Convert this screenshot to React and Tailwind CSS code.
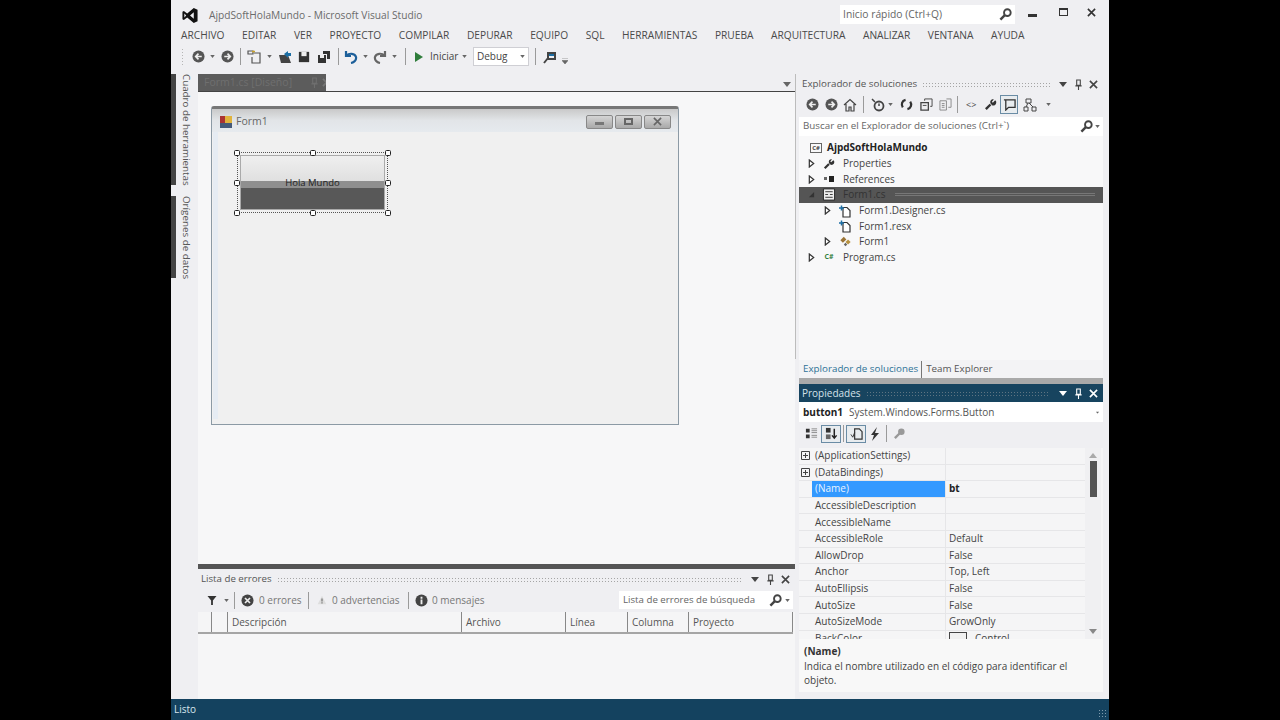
import React from 'react'

const menus = ['ARCHIVO', 'EDITAR', 'VER', 'PROYECTO', 'COMPILAR', 'DEPURAR', 'EQUIPO', 'SQL', 'HERRAMIENTAS', 'PRUEBA', 'ARQUITECTURA', 'ANALIZAR', 'VENTANA', 'AYUDA']

const props = [
  ['(ApplicationSettings)', '', 'group'],
  ['(DataBindings)', '', 'group'],
  ['(Name)', 'bt', 'selected'],
  ['AccessibleDescription', ''],
  ['AccessibleName', ''],
  ['AccessibleRole', 'Default'],
  ['AllowDrop', 'False'],
  ['Anchor', 'Top, Left'],
  ['AutoEllipsis', 'False'],
  ['AutoSize', 'False'],
  ['AutoSizeMode', 'GrowOnly'],
  ['BackColor', 'Control', 'color'],
]

const Svg = ({ className = '', box = '0 0 14 14', children }) => (
  <svg viewBox={box} className={'shrink-0 ' + className}>{children}</svg>
)

const Caret = ({ className = '' }) => (
  <Svg box="0 0 6 4" className={'w-[5px] h-[3px] ' + className}><path d="M0 0h6L3 4z" fill="#666" /></Svg>
)

const Sep = ({ className = '' }) => <div className={'w-px h-[17px] bg-[#9a9a9a] shrink-0 ' + className} />

const Circle = ({ dir = 'left', className = '' }) => (
  <Svg className={'w-[13px] h-[13px] ' + className}>
    <circle cx="7" cy="7" r="6.5" fill="#555" />
    <path d={dir === 'left' ? 'M10.5 7H4.5M7 4L4 7l3 3' : 'M3.5 7h6M7 4l3 3-3 3'} stroke="#eee" strokeWidth="1.8" fill="none" />
  </Svg>
)

const Lens = ({ className = '' }) => (
  <Svg className={'w-[13px] h-[13px] ' + className}>
    <circle cx="9" cy="5" r="3.6" fill="none" stroke="#444" strokeWidth="2" />
    <path d="M6.3 7.7L1.5 12.5" stroke="#444" strokeWidth="2.6" />
  </Svg>
)

const Pin = ({ color = '#444', className = '' }) => (
  <Svg box="0 0 10 12" className={'w-[9px] h-[11px] ' + className}>
    <path d="M3 1h4v6H3zM1.5 7.5h7M5 8v4M7 1v6" stroke={color} strokeWidth="1.2" fill="none" />
  </Svg>
)

const Close = ({ color = '#444', className = '' }) => (
  <Svg box="0 0 10 10" className={'w-[9px] h-[9px] ' + className}>
    <path d="M1 1l8 8M9 1l-8 8" stroke={color} strokeWidth="1.8" />
  </Svg>
)

const HeadCaret = ({ color = '#444', className = '' }) => (
  <Svg box="0 0 8 5" className={'w-[8px] h-[5px] ' + className}><path d="M0 0h8L4 5z" fill={color} /></Svg>
)

const Dots = ({ className = '' }) => (
  <div className={"flex-1 h-[5px] bg-[radial-gradient(#a5a5a5_0.7px,transparent_0.8px)] bg-[length:3px_3px] " + className} />
)

const Expander = ({ open }) => (
  <Svg box="0 0 8 10" className="w-[7px] h-[9px]">
    {open ? <path d="M7 2v6H1z" fill="#333" /> : <path d="M1.5 1l5 4-5 4z" fill="#fff" stroke="#333" strokeWidth="1.4" />}
  </Svg>
)

const FileIcon = () => (
  <Svg className="w-[14px] h-[14px]">
    <path d="M5 3.5h4l3 3v6.5H5z" fill="#fff" stroke="#333" strokeWidth="1.2" />
    <path d="M1 4h5M3.5 1.5v5" stroke="#1c6ea4" strokeWidth="1.5" />
  </Svg>
)

const TreeRow = ({ indent, arrow, icon, text, bold, selected }) => (
  <div className={indent + ' h-[15.7px] flex items-center ' + (selected ? 'bg-[#555555] text-[#333]' : '')}>
    <div className="w-[9px] flex justify-center">{arrow}</div>
    <div className="w-[26px] flex justify-center">{icon}</div>
    <span className={'ml-[1px] whitespace-nowrap ' + (bold ? 'font-bold text-[#222]' : '')}>{text}</span>
    {selected && <div className="ml-[10px] w-[200px] h-[3px] border-y border-[#777]" />}
  </div>
)

const Handle = ({ className }) => (
  <div className={'absolute w-[6px] h-[6px] bg-white border border-[#222] rounded-[1.5px] ' + className} />
)

const FormBtn = ({ children }) => (
  <div className="w-[27px] h-[14px] border border-[#888] rounded-[2px] bg-linear-to-b from-[#d5d5d5] to-[#a9a9a9] flex items-center justify-center">{children}</div>
)

export default function App() {
  return (
    <div className="w-[1280px] h-[720px] overflow-hidden bg-black pl-[171px] font-['Open_Sans',sans-serif] text-[10.5px] text-[#444]">
      <div className="w-[938px] h-full bg-[#efeff2] flex flex-col">
        {/* title bar */}
        <div className="h-[27px] shrink-0 flex items-center pt-[4px]">
          <Svg box="0 0 18 18" className="w-[18px] h-[17px] ml-[10px]">
            <path d="M13 1l4 2v12l-4 2-7-6-3.5 2.8L1 13V5l1.500-.8L6 7zM13 5.500L9 9l4 3.500zM3 7v4l2-2z" fill="#111" fillRule="evenodd" />
          </Svg>
          <span className="ml-[10px] text-[#6b6b6b] text-[10.2px]">AjpdSoftHolaMundo - Microsoft Visual Studio</span>
          <div className="ml-auto w-[175px] h-[19px] bg-white flex items-center pl-[3px] text-[10.3px] text-[#666] mb-[2px]">
            Inicio rápido (Ctrl+Q)
            <Lens className="ml-auto mr-[3px]" />
          </div>
          <div className="w-[9px] h-[3px] bg-[#333] ml-[13px] mb-[1px]" />
          <div className="w-[9px] h-[8px] border border-[#333] border-t-2 ml-[22px] mb-[7px]" />
          <Close color="#333" className="ml-[19px] mr-[13px] mb-[7px]" />
        </div>

        {/* menu */}
        <div className="h-[17px] shrink-0 flex items-center gap-[17.6px] pl-[10px] text-[10.2px] text-[#4a4a4a]">
          {menus.map(m => <span key={m}>{m}</span>)}
        </div>

        {/* toolbar */}
        <div className="h-[25px] shrink-0 flex items-center text-[10px]">
          <div className="ml-[10px] w-[4px] h-[17px] bg-[radial-gradient(#b5b5b5_0.7px,transparent_0.8px)] bg-[length:3px_3px]" />
          <Circle className="ml-[7px]" />
          <Caret className="ml-[5px]" />
          <Circle dir="right" className="ml-[6px]" />
          <Sep className="ml-[6px]" />
          <Svg className="w-[14px] h-[14px] ml-[6px]">
            <path d="M1 1h5v3H1zM7 3h6v10H5V7" fill="none" stroke="#555" strokeWidth="1.2" />
            <path d="M5 1.500h3" stroke="#c9a227" strokeWidth="1.500" />
          </Svg>
          <Caret className="ml-[6px]" />
          <Svg className="w-[14px] h-[14px] ml-[6px]">
            <path d="M1 5h9l3 8H3z" fill="#444" />
            <path d="M6 4l4-3v2h3v3h-3v2z" fill="#1c6ea4" />
          </Svg>
          <Svg className="w-[12px] h-[12px] ml-[6px]">
            <path d="M1 1h12v12H1z" fill="#333" /><path d="M4 1h6v5H4z" fill="#eee" />
          </Svg>
          <Svg className="w-[14px] h-[14px] ml-[7px]">
            <path d="M1 5h8v8H1z" fill="#333" /><path d="M6 1h7v8H10V4H6z" fill="#333" /><path d="M3 5h4v3H3z" fill="#eee" />
          </Svg>
          <Sep className="ml-[7px]" />
          <Svg className="w-[14px] h-[14px] ml-[5px]">
            <path d="M2 1v5h5M2.500 5.500C5 3 11 3 12 7c.6 3-2 5.500-5 6" fill="none" stroke="#1c5f9a" strokeWidth="2.200" />
          </Svg>
          <Caret className="ml-[5px]" />
          <Svg className="w-[14px] h-[14px] ml-[5px]">
            <path d="M12 1v5H7M11.500 5.500C9 3 3 3 2 7c-.6 3 2 5.500 5 6" fill="none" stroke="#666" strokeWidth="2.200" />
          </Svg>
          <Caret className="ml-[5px]" />
          <Sep className="ml-[8px]" />
          <Svg box="0 0 8 10" className="w-[8px] h-[10px] ml-[9px]"><path d="M0 0l8 5-8 5z" fill="#2f7d3b" /></Svg>
          <span className="ml-[7px] w-[29px] text-[#444]">Iniciar</span>
          <Caret className="ml-[3px]" />
          <div className="ml-[6px] w-[56px] h-[19px] bg-white border border-[#cfcfd4] flex items-center pl-[3px] pr-[3px]">
            Debug
            <Caret className="ml-auto" />
          </div>
          <Sep className="ml-[6px]" />
          <Svg className="w-[14px] h-[14px] ml-[6px]">
            <path d="M2 13l4-5M6 3h7v6H6z" stroke="#444" strokeWidth="2" fill="none" />
            <path d="M7 4h5v2H7z" fill="#1c6ea4" />
          </Svg>
          <Svg box="0 0 6 6" className="w-[6px] h-[6px] ml-[6px] mt-[8px]"><path d="M0 0h6M0 2.500h6L3 6z" fill="#666" stroke="#666" strokeWidth=".6" /></Svg>
        </div>

        {/* main area */}
        <div className="flex-1 min-h-0 flex pt-[5px]">
          {/* side rail */}
          <div className="w-[27px] shrink-0 flex flex-col gap-[11px] text-[9.8px] text-[#555]">
            <div className="h-[111px] border-l-[5px] border-[#444] pl-[2px]">
              <span className="[writing-mode:vertical-rl] whitespace-nowrap">Cuadro de herramientas</span>
            </div>
            <div className="h-[82px] border-l-[5px] border-[#444] pl-[2px]">
              <span className="[writing-mode:vertical-rl] whitespace-nowrap">Orígenes de datos</span>
            </div>
          </div>

          {/* center column */}
          <div className="w-[597px] shrink-0 flex flex-col">
            <div className="h-[18px] shrink-0 flex border-b border-[#444]">
              <div className="w-[128px] bg-[#5c5c5c] text-[#6f6f6f] pl-[6px] flex items-center whitespace-nowrap overflow-hidden">
                Form1.cs [Diseño]
                <Pin color="#6f6f6f" className="ml-[18px]" />
                <Close color="#777" className="ml-[3px]" />
              </div>
              <HeadCaret color="#666" className="ml-auto mr-[4px] mt-[8px]" />
            </div>

            {/* designer */}
            <div className="flex-1 min-h-0 bg-[#f7f7f8] pl-[13px] pt-[14px]">
              <div className="w-[468px] h-[319px] border border-[#8c9aa5] rounded-t-[3px] bg-[#f0f0f0] flex flex-col border-t-[3px] border-t-[#777]">
                <div className="h-[23px] shrink-0 bg-linear-to-b from-[#c9c9c9] via-[#e2e5e8] to-[#e6eaee] flex items-center pl-[7px] pt-[2px] text-[#666]">
                  <Svg className="w-[14px] h-[14px]">
                    <path d="M1 1h6v7H1z" fill="#a33" /><path d="M6 1h7v7H6z" fill="#e0b33c" /><path d="M1 8h12v5H1z" fill="#445a7a" />
                  </Svg>
                  <span className="ml-[3px]">Form1</span>
                  <div className="ml-auto mr-[7px] flex gap-[2px]">
                    <FormBtn><div className="w-[9px] h-[3px] bg-[#777] mt-[3px]" /></FormBtn>
                    <FormBtn><div className="w-[9px] h-[7px] border-2 border-[#666]" /></FormBtn>
                    <FormBtn><Close color="#666" /></FormBtn>
                  </div>
                </div>
                <div className="flex-1 ml-[1px] mr-[5px] mb-[5px] border-l-[5px] border-[#e6ecf3] pl-[19px] pt-[20px]">
                  {/* selected button */}
                  <div className="relative w-[151px] h-[61px] border border-dotted border-[#555] p-[2px]">
                    <div className="h-full flex flex-col border border-[#aaa] text-[#222] text-[9.5px]">
                      <div className="h-[25px] bg-linear-to-b from-[#efefef] to-[#e0e0e0]" />
                      <div className="h-[7px] bg-[#8f8f8f] relative">
                        <span className="absolute inset-x-0 -top-[5px] text-center leading-[13px]">Hola Mundo</span>
                      </div>
                      <div className="flex-1 bg-[#585858]" />
                    </div>
                    <Handle className="-left-[4px] -top-[3px]" />
                    <Handle className="left-[72px] -top-[3px]" />
                    <Handle className="-right-[4px] -top-[3px]" />
                    <Handle className="-left-[4px] top-[27px]" />
                    <Handle className="-right-[4px] top-[27px]" />
                    <Handle className="-left-[4px] -bottom-[4px]" />
                    <Handle className="left-[72px] -bottom-[4px]" />
                    <Handle className="-right-[4px] -bottom-[4px]" />
                  </div>
                </div>
              </div>
            </div>

            {/* error list */}
            <div className="h-[135px] shrink-0 flex flex-col border-t-[5px] border-[#555] bg-[#f5f5f6]">
              <div className="h-[19px] shrink-0 flex items-center bg-[#efeff2] pl-[3px] pr-[5px] pt-[1px] text-[#555]">
                <span className="text-[9.7px]">Lista de errores</span>
                <Dots className="mx-[5px]" />
                <HeadCaret className="ml-[4px]" />
                <Pin className="ml-[7px]" />
                <Close className="ml-[6px]" />
              </div>
              <div className="h-[24px] shrink-0 flex items-center bg-[#efeff2] text-[10px] text-[#777]">
                <Svg box="0 0 10 10" className="w-[10px] h-[9px] ml-[9px]"><path d="M0 0h10L6 5v5H4V5z" fill="#333" /></Svg>
                <Caret className="ml-[7px]" />
                <Sep className="ml-[5px]" />
                <Svg className="w-[13px] h-[13px] ml-[6px]">
                  <circle cx="7" cy="7" r="6.500" fill="#444" /><path d="M4.300 4.300l5.400 5.400M9.700 4.300l-5.400 5.400" stroke="#eee" strokeWidth="1.800" />
                </Svg>
                <span className="ml-[5px] w-[40px] whitespace-nowrap">0 errores</span>
                <Sep className="ml-[9px]" />
                <Svg className="w-[10px] h-[12px] ml-[8px]"><path d="M7 1l6 12H1z" fill="#ddd" /><path d="M7 5v4M7 10v2" stroke="#666" strokeWidth="1.500" /></Svg>
                <span className="ml-[5px] w-[67px] whitespace-nowrap">0 advertencias</span>
                <Sep className="ml-[9px]" />
                <Svg className="w-[13px] h-[13px] ml-[6px]">
                  <circle cx="7" cy="7" r="6.500" fill="#444" /><path d="M7 6v5M7 3v2" stroke="#eee" strokeWidth="2" />
                </Svg>
                <span className="ml-[4px] whitespace-nowrap">0 mensajes</span>
                <div className="ml-auto mr-[2px] w-[174px] h-[18px] bg-white flex items-center pl-[4px] pr-[3px] text-[9.7px] text-[#666]">
                  Lista de errores de búsqueda
                  <Lens className="ml-auto" />
                  <Caret className="ml-[3px]" />
                </div>
              </div>
              <div className="h-[22px] shrink-0 flex border-b-2 border-[#a5a5a5] bg-[#f5f5f6] mr-[2px] text-[10px] text-[#555] [&>div]:pl-[4px] [&>div]:flex [&>div]:items-center [&>div]:border-r [&>div]:border-[#888]">
                <div className="w-[14px]" />
                <div className="w-[16px]" />
                <div className="w-[234px]">Descripción</div>
                <div className="w-[104px]">Archivo</div>
                <div className="w-[62px]">Línea</div>
                <div className="w-[61px]">Columna</div>
                <div className="flex-1">Proyecto</div>
              </div>
              <div className="flex-1 bg-[#f6f6f7]" />
            </div>
          </div>

          {/* right panels */}
          <div className="w-[4px] shrink-0 bg-[#efeff2] border-l border-[#bcbcbc] mb-[340px]" />
          <div className="w-[304px] shrink-0 flex flex-col">
            <div className="h-[19px] shrink-0 flex items-center pl-[3px] pr-[5px] pt-[1px] text-[#555]">
              <span className="text-[9.8px]">Explorador de soluciones</span>
              <Dots className="mx-[5px]" />
              <HeadCaret className="ml-[4px]" />
              <Pin className="ml-[7px]" />
              <Close className="ml-[6px]" />
            </div>
            <div className="h-[24px] shrink-0 flex items-center pb-[1px]">
              <Circle className="ml-[7px]" />
              <Circle dir="right" className="ml-[6px]" />
              <Svg className="w-[14px] h-[14px] ml-[5px]"><path d="M1 7l6-5.500L13 7M3 6v7h3V9h2v4h3V6" fill="none" stroke="#444" strokeWidth="1.200" /></Svg>
              <Sep className="ml-[6px]" />
              <Svg className="w-[14px] h-[14px] ml-[7px]">
                <circle cx="8" cy="8" r="4.500" fill="none" stroke="#444" strokeWidth="1.800" /><path d="M1 1l3 3M8 5.500V8" stroke="#444" strokeWidth="1.500" />
              </Svg>
              <Caret className="ml-[3px]" />
              <Svg className="w-[13px] h-[13px] ml-[7px]">
                <path d="M3 10C1 7 2 3 6 2M11 4c2 3 1 7-3 8" fill="none" stroke="#333" strokeWidth="2.400" />
              </Svg>
              <Svg className="w-[13px] h-[13px] ml-[7px]">
                <path d="M1 5h8v8H1z" fill="none" stroke="#444" strokeWidth="1.400" /><path d="M3 8h4" stroke="#444" /><path d="M5 3V1h8v8h-2" fill="none" stroke="#444" />
              </Svg>
              <Svg className="w-[13px] h-[13px] ml-[6px]">
                <path d="M1 3h7v10H1zM8 1h5v9H10" fill="none" stroke="#888" /><path d="M3 6h3M3 8h3M3 10h3" stroke="#888" />
              </Svg>
              <Sep className="ml-[5px]" />
              <span className="ml-[8px] text-[9px] text-[#444]">{'<>'}</span>
              <Svg className="w-[13px] h-[13px] ml-[8px]">
                <path d="M2 12l5-5" stroke="#333" strokeWidth="2.600" /><path d="M12 2.500L9.500 5 8.500 4l2-2.500C8 1 6 3 7 6l2 2c3 .8 4.800-2 4-4.500z" fill="#333" />
              </Svg>
              <div className="ml-[3px] w-[18px] h-[19px] border border-[#6a8ca5] bg-[#e8ecef] flex items-center justify-center">
                <Svg className="w-[13px] h-[13px]"><path d="M1 2h12v8H6l-3 3V2" fill="none" stroke="#333" strokeWidth="1.400" /></Svg>
              </div>
              <Svg className="w-[14px] h-[14px] ml-[5px]">
                <path d="M3 1h5v4H3zM1 9h4v4H1zM9 9h4v4H9zM5 5L3 9M6 5l4 4" fill="none" stroke="#444" />
              </Svg>
              <Caret className="ml-[9px]" />
            </div>
            <div className="h-[19px] shrink-0 bg-white flex items-center pl-[4px] pr-[3px] text-[9.8px] text-[#666]">
              Buscar en el Explorador de soluciones (Ctrl+`)
              <Lens className="ml-auto" />
              <Caret className="ml-[2px]" />
            </div>

            {/* tree */}
            <div className="h-[224px] shrink-0 bg-[#f8f8f9] pt-[4px] text-[10px] text-[#444]">
              <div className="h-[15.7px] flex items-center pl-[11px]">
                <div className="w-[12px] h-[10px] border border-[#666] text-[6px] leading-[8px] text-center font-bold">C#</div>
                <span className="ml-[5px] font-bold text-[#222]">AjpdSoftHolaMundo</span>
              </div>
              <TreeRow indent="pl-[8px]" arrow={<Expander />} text="Properties" icon={
                <Svg className="w-[12px] h-[12px]">
                  <path d="M2 12l5-5" stroke="#333" strokeWidth="2.600" /><path d="M12 2.500L9.500 5 8.500 4l2-2.500C8 1 6 3 7 6l2 2c3 .8 4.800-2 4-4.500z" fill="#333" />
                </Svg>} />
              <TreeRow indent="pl-[8px]" arrow={<Expander />} text="References" icon={
                <Svg box="0 0 12 8" className="w-[12px] h-[8px]"><path d="M1 2h3v3H1z" fill="#666" /><path d="M6 1h5v6H6z" fill="#222" /></Svg>} />
              <TreeRow indent="pl-[8px]" selected arrow={<Expander open />} text="Form1.cs" icon={
                <Svg className="w-[14px] h-[13px]"><path d="M1 1h12v12H1z" fill="#eee" stroke="#222" /><path d="M3 4h8M3 7h3M8 7h3M3 10h8" stroke="#333" /></Svg>} />
              <TreeRow indent="pl-[24px]" arrow={<Expander />} text="Form1.Designer.cs" icon={<FileIcon />} />
              <TreeRow indent="pl-[24px]" text="Form1.resx" icon={<FileIcon />} />
              <TreeRow indent="pl-[24px]" arrow={<Expander />} text="Form1" icon={
                <Svg className="w-[13px] h-[12px]"><path d="M1 5l4-4 3 3-4 4z" fill="#9a7436" /><path d="M7 7l3-3 3 3-3 3z" fill="#b8923f" /><path d="M5 10l2 2 2-2-2-2z" fill="#666" /></Svg>} />
              <TreeRow indent="pl-[8px]" arrow={<Expander />} text="Program.cs" icon={<span className="text-[7px] font-bold text-[#35803f]">C#</span>} />
            </div>

            <div className="h-[18px] shrink-0 flex items-center bg-[#f3f3f5] pt-[1px] text-[9.8px]">
              <span className="pl-[4px] pr-[3px] text-[#2d7296]">Explorador de soluciones</span>
              <div className="w-px h-[17px] bg-[#777]" />
              <span className="pl-[4px] text-[#555]">Team Explorer</span>
            </div>
            <div className="h-[6px] shrink-0 bg-[#a9a9a9]" />

            {/* properties */}
            <div className="h-[18px] shrink-0 flex items-center bg-[#17445f] pl-[3px] pr-[5px] text-[#d5e2ea] text-[10px]">
              Propiedades
              <Dots className="mx-[5px] opacity-50" />
              <HeadCaret color="#fff" className="ml-[4px]" />
              <Pin color="#fff" className="ml-[7px]" />
              <Close color="#fff" className="ml-[6px]" />
            </div>
            <div className="h-[20px] shrink-0 bg-white flex items-center pl-[4px] pr-[3px] text-[10px]">
              <b className="text-[#222]">button1</b>
              <span className="ml-[6px] text-[#555]">System.Windows.Forms.Button</span>
              <Caret className="ml-auto scale-75" />
            </div>
            <div className="h-[26px] shrink-0 flex items-center pb-[3px]">
              <Svg className="w-[13px] h-[13px] ml-[6px]">
                <path d="M1 2h4v4H1zM1 8h4v4H1z" fill="#333" /><path d="M7 2h6M7 4h6M7 6h6M7 9h6M7 11h6" stroke="#888" />
              </Svg>
              <div className="ml-[3px] w-[20px] h-[18px] border border-[#6a8ca5] bg-[#e8ecef] flex items-center justify-center">
                <Svg className="w-[13px] h-[13px]"><path d="M1 1h5v5H1z" fill="#333" /><path d="M1 8h5v5H1z" fill="#666" /><path d="M10 2v10M7.500 9l2.500 3 2.500-3" stroke="#222" strokeWidth="1.600" fill="none" /></Svg>
              </div>
              <Sep className="ml-[2px]" />
              <div className="ml-[2px] w-[20px] h-[18px] border border-[#6a8ca5] bg-[#e8ecef] flex items-center justify-center">
                <Svg className="w-[13px] h-[13px]"><path d="M5 2h5l3 3v8H5z" fill="none" stroke="#333" strokeWidth="1.300" /><path d="M1 8l2 3 2-5" fill="none" stroke="#333" /></Svg>
              </div>
              <Svg box="0 0 10 14" className="w-[10px] h-[14px] ml-[4px]"><path d="M7 0L1 8h3l-2 6 7-8H5z" fill="#333" /></Svg>
              <Sep className="ml-[6px]" />
              <Svg className="w-[13px] h-[13px] ml-[6px]">
                <path d="M2 12l5-5" stroke="#999" strokeWidth="2.600" /><circle cx="9" cy="5" r="3.500" fill="#999" />
              </Svg>
            </div>
            <div className="h-[191px] shrink-0 flex overflow-hidden bg-[#f5f5f6] text-[10px] text-[#444]">
              <div className="flex-1 min-w-0">
                {props.map(([name, value, kind]) => (
                  <div key={name} className="h-[16.6px] flex items-center border-b border-[#e6e6e8]">
                    <div className="w-[13px] shrink-0 flex justify-center">
                      {kind === 'group' && (
                        <Svg box="0 0 9 9" className="w-[9px] h-[9px]"><path d="M.5.500h8v8h-8zM2 4.500h5M4.500 2v5" fill="none" stroke="#444" /></Svg>
                      )}
                    </div>
                    <div className={'w-[134px] shrink-0 h-full flex items-center pl-[3px] border-r border-[#e6e6e8] ' + (kind === 'selected' ? 'bg-[#3399ff] text-[#e8f3ff]' : '')}>{name}</div>
                    <div className={'pl-[3px] flex items-center ' + (kind === 'selected' ? 'font-bold text-[#222]' : '')}>
                      {kind === 'color' && <div className="w-[18px] h-[12px] border border-[#444] bg-[#f0f0f0] mr-[8px]" />}
                      {value}
                    </div>
                  </div>
                ))}
              </div>
              <div className="w-[16px] shrink-0 flex flex-col items-center bg-[#f0f0f2] pt-[5px] mr-[2px]">
                <HeadCaret color="#aaa" className="rotate-180" />
                <div className="w-[7px] h-[36px] bg-[#555] mt-[3px]" />
                <div className="flex-1" />
                <HeadCaret color="#888" className="mb-[5px]" />
              </div>
            </div>
            <div className="h-[53px] shrink-0 bg-[#f8f8f8] pl-[5px] pr-[8px] pt-[5px] text-[10px] leading-[14.5px] text-[#444]">
              <div className="font-bold text-[#333]">(Name)</div>
              Indica el nombre utilizado en el código para identificar el objeto.
            </div>
          </div>
        </div>

        {/* status bar */}
        <div className="h-[21px] shrink-0 bg-[#14425f] flex items-center pl-[3px] text-[#d9e6ee] text-[10px]">
          Listo
          <div className="ml-auto mr-[3px] mt-[6px] w-[8px] h-[8px] bg-[radial-gradient(#7f9bad_0.7px,transparent_0.8px)] bg-[length:3px_3px]" />
        </div>
      </div>
    </div>
  )
}
